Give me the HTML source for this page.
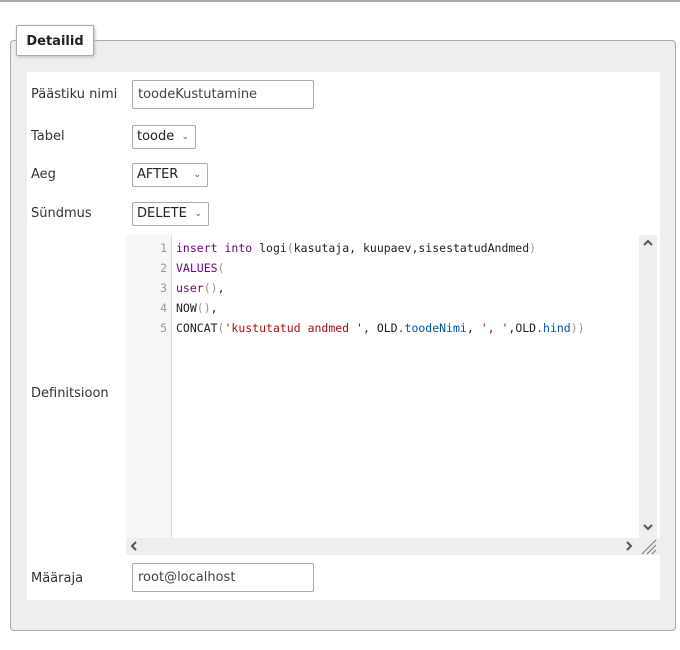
<!DOCTYPE html>
<html><head><style>
body{margin:0;width:680px;height:650px;background:#fff;position:relative;font-family:"DejaVu Sans","Liberation Sans",sans-serif;font-size:13px;color:#333;overflow:hidden}
.abs{position:absolute}
.topline{left:0;top:0;width:680px;height:2px;background:#aaa}
.fs{left:10px;top:40px;width:666px;height:591px;background:#eee;border:1px solid #aaa;border-radius:4px;box-sizing:border-box}
.legend{left:16px;top:25px;width:78px;height:31px;background:#fff;border:1px solid #aaa;border-radius:2px;box-sizing:border-box;box-shadow:1px 1px 3px #bbb;font-weight:bold;font-size:13px;color:#222;line-height:31px;text-align:center}
.inner{left:27px;top:72px;width:633px;height:528px;background:#fff}
.lbl{left:31px;font-size:13px;color:#333}
.inp{left:132px;width:182px;height:29px;border:1px solid #aaa;border-radius:2px;box-sizing:border-box;padding-left:5px;line-height:27px;font-size:13px;color:#444}
.sel{left:132px;height:24px;border:1px solid #aaa;border-radius:2px;box-sizing:border-box;padding-left:4px;line-height:22px;font-size:13px;color:#222}
.sel span{position:absolute;right:6px;top:0;font-size:9px;color:#555}
.ed{left:126px;top:235px;width:534px;height:320px;background:#fff}
.gut{left:126px;top:235px;width:45px;height:303px;background:#f7f7f7;border-right:1px solid #ddd}
.code{font-family:"DejaVu Sans Mono","Liberation Mono",monospace;font-size:11.5px;line-height:20px;white-space:pre}
.ln{left:126px;width:41px;text-align:right;color:#999;top:238px}
.src{left:176px;top:238px;color:#222}
.k{color:#708}.b{color:#997}.s{color:#a11}.p{color:#05a}
.vs{left:639px;top:235px;width:18px;height:303px;background:#eee}
.hs{left:126px;top:538px;width:534px;height:17px;background:#eee}
</style></head><body>
<div class="abs topline"></div>
<div class="abs fs"></div>
<div class="abs legend">Detailid</div>
<div class="abs inner"></div>
<div class="abs lbl" style="top:87px">Päästiku nimi</div>
<div class="abs inp" style="top:80px">toodeKustutamine</div>
<div class="abs lbl" style="top:129px">Tabel</div>
<div class="abs sel" style="top:125px;width:64px">toode<span>&#8964;</span></div>
<div class="abs lbl" style="top:167px">Aeg</div>
<div class="abs sel" style="top:163px;width:76px">AFTER<span>&#8964;</span></div>
<div class="abs lbl" style="top:206px">Sündmus</div>
<div class="abs sel" style="top:202px;width:77px">DELETE<span>&#8964;</span></div>
<div class="abs lbl" style="top:386px">Definitsioon</div>
<div class="abs ed"></div>
<div class="abs gut"></div>
<div class="abs code ln">1
2
3
4
5</div>
<div class="abs code src"><span class="k">insert</span> <span class="k">into</span> logi<span class="b">(</span>kasutaja, kuupaev,sisestatudAndmed<span class="b">)</span>
<span class="k">VALUES</span><span class="b">(</span>
<span class="k">user</span><span class="b">()</span>,
NOW<span class="b">()</span>,
CONCAT<span class="b">(</span><span class="s">'kustutatud andmed '</span>, OLD<span class="p">.toodeNimi</span>, <span class="s">', '</span>,OLD<span class="p">.hind</span><span class="b">))</span></div>
<div class="abs vs"></div>
<div class="abs hs"></div>
<svg class="abs" style="left:639px;top:235px" width="18" height="303"><path d="M5 10l4-4 4 4" fill="none" stroke="#555" stroke-width="2"/><path d="M5 290l4 4 4-4" fill="none" stroke="#555" stroke-width="2"/></svg>
<svg class="abs" style="left:126px;top:538px" width="534" height="17"><path d="M10 4l-4 4 4 4" fill="none" stroke="#555" stroke-width="2"/><path d="M501 4l4 4-4 4" fill="none" stroke="#555" stroke-width="2"/><path d="M516 16l14-14M521 16l9-9M526 16l4-4" stroke="#777" stroke-width="1"/></svg>
<div class="abs lbl" style="top:571px">Määraja</div>
<div class="abs inp" style="top:563px">root@localhost</div>
</body></html>
